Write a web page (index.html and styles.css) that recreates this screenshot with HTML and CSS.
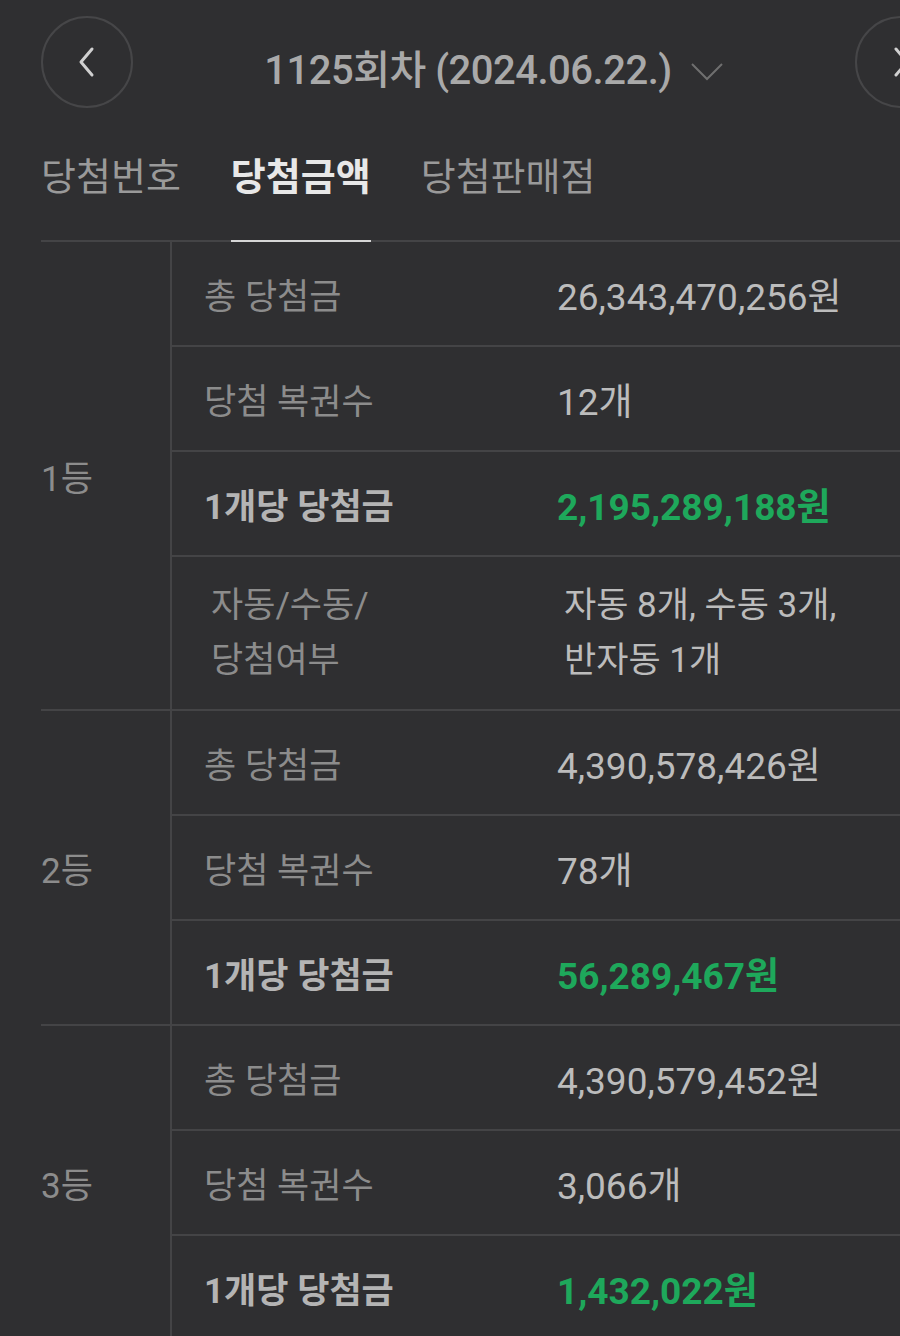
FILE: index.html
```html
<!DOCTYPE html>
<html lang="ko">
<head>
<meta charset="UTF-8" />
<meta name="viewport" content="width=device-width, initial-scale=1.0"/>
<title>당첨금액</title>
<link rel="stylesheet" href="styles.css">
</head>
<body>
    <div class="page">
        <!-- Round selector -->
        <div class="round-nav">
            <button class="round-btn">
                <svg width="20" height="32" viewBox="0 0 20 32"><polyline points="15,3 4,16 15,29" fill="none" stroke="#d0d0d0" stroke-width="3" stroke-linecap="round" stroke-linejoin="round"/></svg>
            </button>
            <div class="round-title">
                <span>1125회차 (2024.06.22.)</span>
                <svg class="caret" width="34" height="20" viewBox="0 0 34 20"><polyline points="2,3 17,18 32,3" fill="none" stroke="#6f6f6f" stroke-width="2"/></svg>
            </div>
            <button class="round-btn">
                <svg width="20" height="32" viewBox="0 0 20 32"><polyline points="5,3 16,16 5,29" fill="none" stroke="#d0d0d0" stroke-width="3" stroke-linecap="round" stroke-linejoin="round"/></svg>
            </button>
        </div>

        <!-- Tabs -->
        <div class="tabs">
            <div class="tab">당첨번호</div>
            <div class="tab active">당첨금액</div>
            <div class="tab">당첨판매점</div>
        </div>

        <!-- Prize table -->
        <div class="prize-table">
            <div class="rank-group">
                <div class="rank">1등</div>
                <div class="rank-rows">
                    <div class="row">
                        <div class="label">총 당첨금</div>
                        <div class="value">26,343,470,256원</div>
                    </div>
                    <div class="row">
                        <div class="label">당첨 복권수</div>
                        <div class="value">12개</div>
                    </div>
                    <div class="row">
                        <div class="label strong">1개당 당첨금</div>
                        <div class="value prize">2,195,289,188원</div>
                    </div>
                    <div class="row row-multi">
                        <div class="label">자동/수동/<br>당첨여부</div>
                        <div class="value small">자동 8개, 수동 3개,<br>반자동 1개</div>
                    </div>
                </div>
            </div>

            <div class="rank-group">
                <div class="rank">2등</div>
                <div class="rank-rows">
                    <div class="row">
                        <div class="label">총 당첨금</div>
                        <div class="value">4,390,578,426원</div>
                    </div>
                    <div class="row">
                        <div class="label">당첨 복권수</div>
                        <div class="value">78개</div>
                    </div>
                    <div class="row">
                        <div class="label strong">1개당 당첨금</div>
                        <div class="value prize">56,289,467원</div>
                    </div>
                </div>
            </div>

            <div class="rank-group">
                <div class="rank">3등</div>
                <div class="rank-rows">
                    <div class="row">
                        <div class="label">총 당첨금</div>
                        <div class="value">4,390,579,452원</div>
                    </div>
                    <div class="row">
                        <div class="label">당첨 복권수</div>
                        <div class="value">3,066개</div>
                    </div>
                    <div class="row">
                        <div class="label strong">1개당 당첨금</div>
                        <div class="value prize">1,432,022원</div>
                    </div>
                </div>
            </div>
        </div>
    </div>
</body>
</html>
```

FILE: styles.css
```css
html, body {
    margin: 0;
    padding: 0;
    height: 100%;
    overflow: hidden;
}

body {
    background: #2f2f31;
    font-family: "Roboto", "Noto Sans CJK KR", sans-serif;
    color: #8c8c8c;
}

.page {
    padding-left: 41px;
}

/* round selector */
.round-nav {
    display: flex;
    align-items: center;
    padding-top: 16px;
    margin-right: -47px;
}

.round-btn {
    flex: none;
    width: 92px;
    height: 92px;
    border-radius: 50%;
    border: 2px solid #464648;
    background: transparent;
    display: flex;
    align-items: center;
    justify-content: center;
    padding: 0;
}

.round-title {
    flex: 1;
    display: flex;
    align-items: center;
    justify-content: center;
    gap: 18px;
    padding-top: 10px;
    font-size: 40px;
    font-weight: 500;
    color: #a9a9a9;
    letter-spacing: -0.5px;
}

.round-title .caret {
    margin-top: 8px;
}

/* tabs */
.tabs {
    display: flex;
    gap: 50px;
    margin-top: 46px;
    border-bottom: 2px solid #444446;
}

.tab {
    font-family: "Noto Sans CJK KR", sans-serif;
    font-size: 38px;
    line-height: 40px;
    padding-bottom: 46px;
    color: #9a9a9a;
}

.tab.active {
    color: #e8e8e8;
    font-weight: bold;
    border-bottom: 2px solid #d6d6d6;
    margin-bottom: -2px;
}

/* prize table */
.rank-group {
    display: flex;
    border-bottom: 2px solid #444446;
}

.rank {
    flex: none;
    width: 129px;
    border-right: 2px solid #444446;
    display: flex;
    align-items: center;
    font-size: 35px;
    color: #8c8c8c;
}

.rank-rows {
    flex: 1;
}

.row {
    display: grid;
    grid-template-columns: 353px 1fr;
    align-items: center;
    height: 103px;
    padding-left: 32px;
    border-bottom: 2px solid #444446;
}

.row:last-child {
    border-bottom: none;
}

.row-multi {
    height: 152px;
    padding-left: 39px;
    line-height: 55px;
}

.label {
    font-size: 35px;
    color: #8c8c8c;
}

.label.strong {
    font-weight: bold;
    color: #b4b4b4;
}

.value {
    font-size: 37px;
    color: #bcbcbc;
}

.value.small {
    font-size: 35px;
}

.value.prize {
    font-weight: bold;
    color: #1ea85b;
}
```
